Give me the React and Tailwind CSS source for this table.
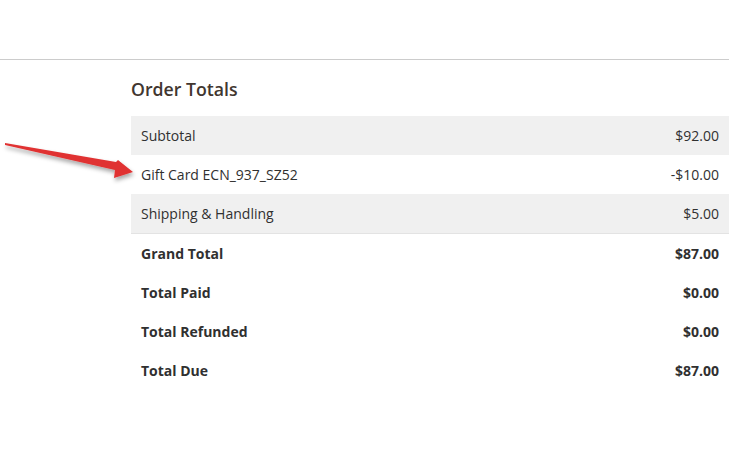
import React from "react";

const rows = [
  { label: "Subtotal", value: "$92.00", shaded: true },
  { label: "Gift Card ECN_937_SZ52", value: "-$10.00" },
  { label: "Shipping & Handling", value: "$5.00", shaded: true, border: true },
];

const totals = [
  { label: "Grand Total", value: "$87.00" },
  { label: "Total Paid", value: "$0.00" },
  { label: "Total Refunded", value: "$0.00" },
  { label: "Total Due", value: "$87.00" },
];

function Arrow() {
  return (
    <svg
      className="absolute left-0 top-0 pointer-events-none"
      width="150"
      height="200"
      viewBox="0 0 150 200"
    >
      <defs>
        <filter id="shadow" x="-20%" y="-50%" width="140%" height="200%">
          <feDropShadow dx="1" dy="3" stdDeviation="2" floodColor="#000" floodOpacity="0.35" />
        </filter>
      </defs>
      <polygon
        points="5,143 116,162 118,160 133,172 114,178 115,170 5,145"
        fill="#e03232"
        filter="url(#shadow)"
      />
    </svg>
  );
}

export default function App() {
  return (
    <div
      className="relative w-[753px] h-[467px] bg-white text-[#303030]"
      style={{ fontFamily: '"Open Sans", sans-serif' }}
    >
      <div className="h-[59px]" />
      <div className="w-[729px] border-t border-[#cccccc]">
        <div className="pl-[131px] pt-[17px]">
          <h2 className="text-[17.7px] leading-[24px] font-semibold text-[#41362f] mb-[15px]">
            Order Totals
          </h2>
          <div className="text-[14px]">
            {rows.map((r) => (
              <div
                key={r.label}
                className={`flex items-center justify-between h-[39px] px-[10px] ${
                  r.shaded ? "bg-[#f0f0f0]" : "bg-white"
                } ${r.border ? "border-b border-[#e3e3e3] h-[40px]" : ""}`}
              >
                <span>{r.label}</span>
                <span>{r.value}</span>
              </div>
            ))}
            {totals.map((r) => (
              <div
                key={r.label}
                className="flex items-center justify-between h-[39px] px-[10px] font-bold"
              >
                <span>{r.label}</span>
                <span>{r.value}</span>
              </div>
            ))}
          </div>
        </div>
      </div>
      <Arrow />
    </div>
  );
}
